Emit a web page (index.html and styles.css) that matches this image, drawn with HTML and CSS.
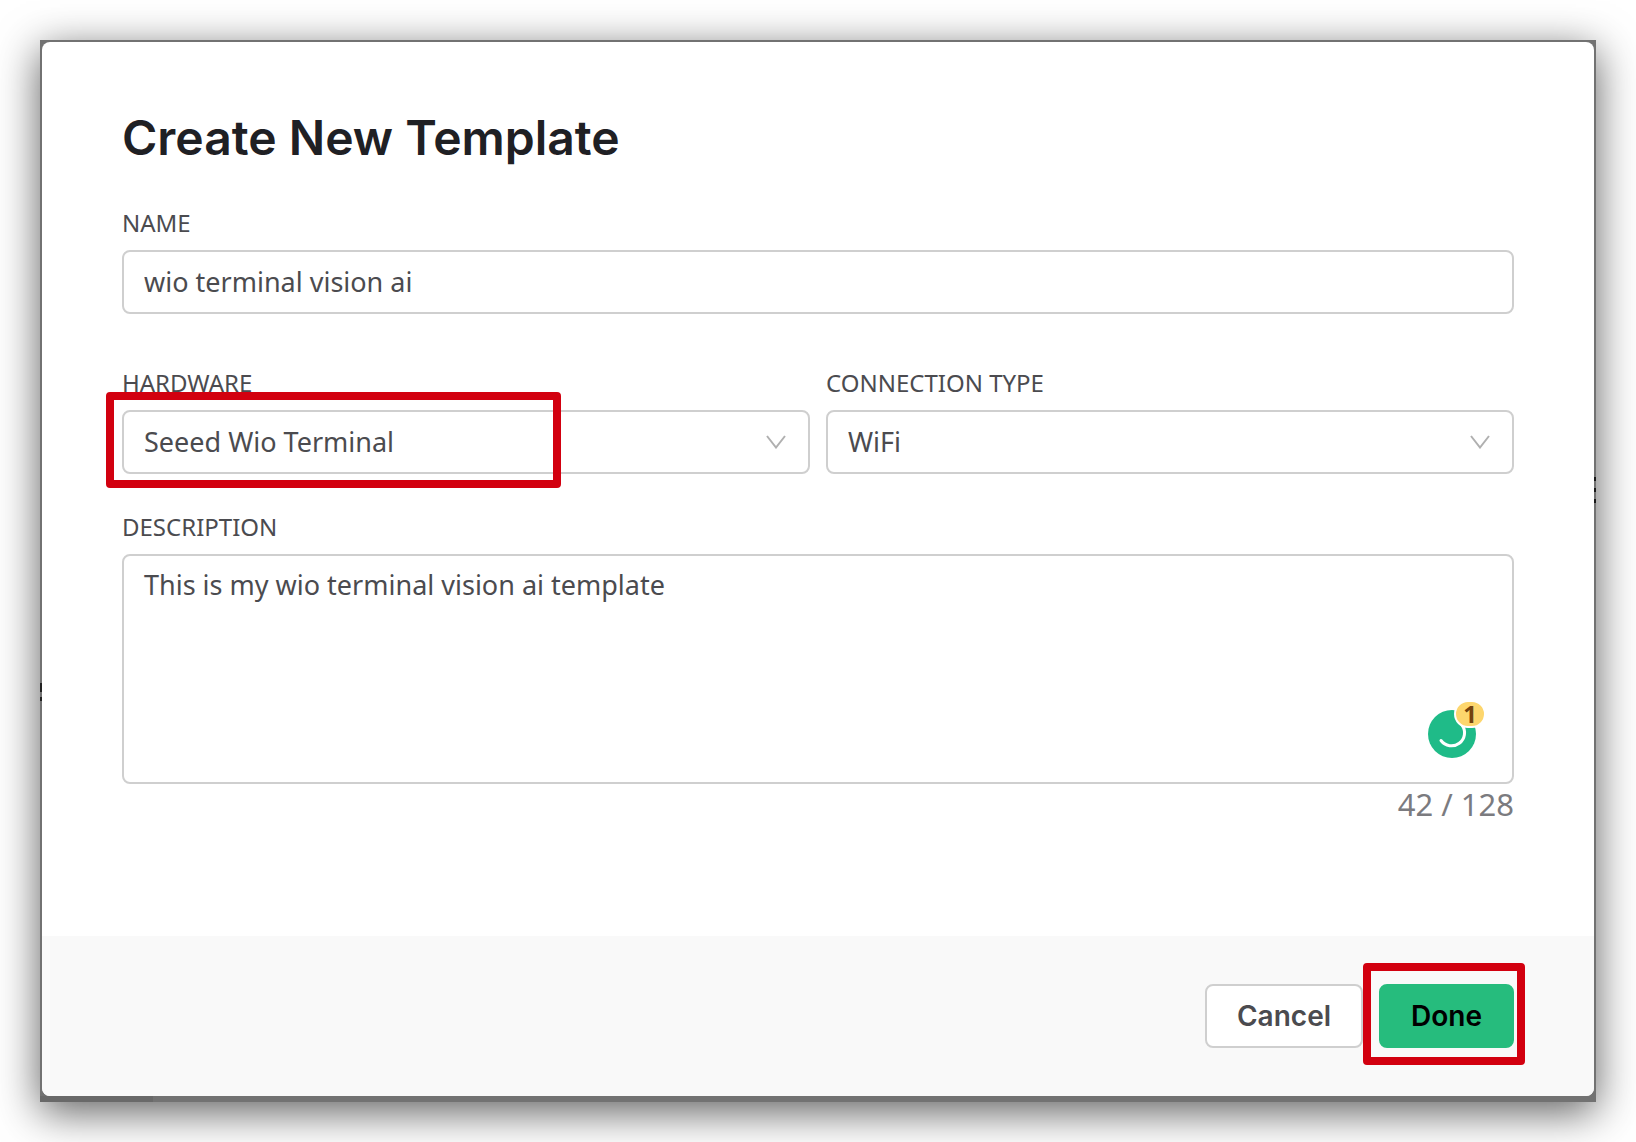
FILE: index.html
```html
<!DOCTYPE html>
<html lang="en">
<head>
    <meta charset="UTF-8">
    <meta name="viewport" content="width=device-width, initial-scale=1.0">
    <title>Create New Template</title>
    <link rel="stylesheet" href="styles.css">
</head>
<body>
    <div class="backdrop">
        <!-- Bits of the page behind the dialog -->
        <span class="sliver sliver-text"></span>
        <span class="sliver sliver-menu"></span>
        <span class="sliver sliver-nav"></span>

        <form class="dialog">
            <div class="dialog-body">
                <h1>Create New Template</h1>

                <div class="field">
                    <label for="name">NAME</label>
                    <input class="control" type="text" id="name" value="wio terminal vision ai">
                </div>

                <div class="field-row">
                    <div class="field">
                        <label for="hardware">HARDWARE</label>
                        <div class="select-wrap">
                            <select class="control" id="hardware">
                                <option>Seeed Wio Terminal</option>
                            </select>
                            <svg class="chevron" viewBox="0 0 20 14"><path d="M1 1l9 11.5L19 1"/></svg>
                            <span class="highlight highlight-hardware"></span>
                        </div>
                    </div>
                    <div class="field">
                        <label for="connection">CONNECTION TYPE</label>
                        <div class="select-wrap">
                            <select class="control" id="connection">
                                <option>WiFi</option>
                            </select>
                            <svg class="chevron" viewBox="0 0 20 14"><path d="M1 1l9 11.5L19 1"/></svg>
                        </div>
                    </div>
                </div>

                <div class="field">
                    <label for="description">DESCRIPTION</label>
                    <div class="textarea-wrap">
                        <textarea class="control" id="description" maxlength="128" spellcheck="false">This is my wio terminal vision ai template</textarea>
                        <button class="checker" type="button" aria-label="Writing suggestions">
                            <svg viewBox="0 0 60 60">
                                <circle cx="26" cy="34" r="24" fill="#1fbb88"/>
                                <path d="M36 25A13 13 0 0 1 15 40.500" fill="none" stroke="#fff" stroke-width="3" stroke-linecap="round"/>
                            </svg>
                            <span class="checker-count">1</span>
                        </button>
                    </div>
                    <div class="counter">42 / 128</div>
                </div>
            </div>

            <div class="dialog-footer">
                <button class="btn" type="button">Cancel</button>
                <div class="done-wrap">
                    <button class="btn btn-primary" type="button">Done</button>
                    <span class="highlight highlight-done"></span>
                </div>
            </div>
        </form>
    </div>
</body>
</html>
```
FILE: styles.css
```css
* {
    box-sizing: border-box;
}

body {
    margin: 0;
    padding: 40px;
    background: #fff;
    color: #4b4b4f;
    font-family: 'Noto Sans', sans-serif;
}

/* Dimmed page behind the dialog */
.backdrop {
    position: relative;
    padding: 2px 2px 6px;
    background: #727272;
    box-shadow: 0 10px 40px rgba(0, 0, 0, 0.63);
}

.sliver {
    position: absolute;
    width: 2px;
}

.sliver-text {
    left: 0;
    top: 643px;
    height: 18px;
    background: linear-gradient(#222 9px, transparent 9px 14px, #222 14px);
}

.sliver-menu {
    right: 0;
    top: 437px;
    height: 26px;
    background: repeating-linear-gradient(#1a1a1a 0 4px, transparent 4px 11px);
}

.sliver-nav {
    left: 0;
    bottom: 0;
    width: 113px;
    height: 6px;
    background: #696969;
}

/* Dialog */
.dialog {
    position: relative;
    border-radius: 8px;
    background: #fff;
    overflow: hidden;
}

.dialog-body {
    padding: 68px 80px 111px;
}

h1 {
    margin: 0 0 41px;
    font-family: 'Inter', sans-serif;
    font-size: 48px;
    font-weight: 600;
    line-height: 56px;
    color: #1f2024;
}

/* Fields */
.field-row {
    display: grid;
    grid-template-columns: 1fr 1fr;
    gap: 16px;
    margin: 53px 0 37px;
}

label {
    display: block;
    margin-bottom: 11px;
    font-size: 24px;
    line-height: 32px;
}

.control {
    display: block;
    width: 100%;
    height: 64px;
    padding: 0 20px 2px;
    border: 2px solid #cfcfcf;
    border-radius: 8px;
    background: #fff;
    color: inherit;
    font-family: inherit;
    font-size: 27px;
    outline: none;
    appearance: none;
}

.select-wrap,
.textarea-wrap,
.done-wrap {
    position: relative;
}

.chevron {
    position: absolute;
    right: 24px;
    top: 25px;
    width: 20px;
    height: 14px;
    fill: none;
    stroke: #b0b0b0;
    stroke-width: 2;
    pointer-events: none;
}

textarea.control {
    height: 230px;
    padding: 7px 20px;
    line-height: 44px;
    resize: none;
}

.counter {
    font-size: 31px;
    line-height: 41px;
    text-align: right;
    color: #7b7b7f;
}

/* Writing checker badge */
.checker {
    position: absolute;
    right: 28px;
    bottom: 24px;
    width: 60px;
    height: 60px;
    padding: 0;
    border: none;
    background: none;
}

.checker svg {
    display: block;
}

.checker-count {
    position: absolute;
    right: 0;
    top: 0;
    width: 32px;
    height: 28px;
    border: 2px solid #fff;
    border-radius: 14px;
    background: #fdd66d;
    color: #74420c;
    font-family: 'Open Sans', sans-serif;
    font-size: 24px;
    font-weight: 700;
    line-height: 24px;
}

/* Footer */
.dialog-footer {
    display: flex;
    justify-content: flex-end;
    gap: 16px;
    padding: 48px 80px;
    background: #f9f9f9;
}

.btn {
    height: 64px;
    padding: 0 30px;
    border: 2px solid #cfcfcf;
    border-radius: 8px;
    background: #fff;
    color: #4b4b4f;
    font-family: 'Inter', sans-serif;
    font-size: 28px;
    font-weight: 600;
}

.btn-primary {
    border-color: #26bc7d;
    background: #26bc7d;
    color: #000;
}

/* Red callouts */
.highlight {
    position: absolute;
    border: 8px solid #d2000f;
    border-radius: 4px;
    pointer-events: none;
}

.highlight-hardware {
    left: -16px;
    top: -18px;
    width: 455px;
    height: 96px;
}

.highlight-done {
    inset: -21px -11px -17px -16px;
}
```
